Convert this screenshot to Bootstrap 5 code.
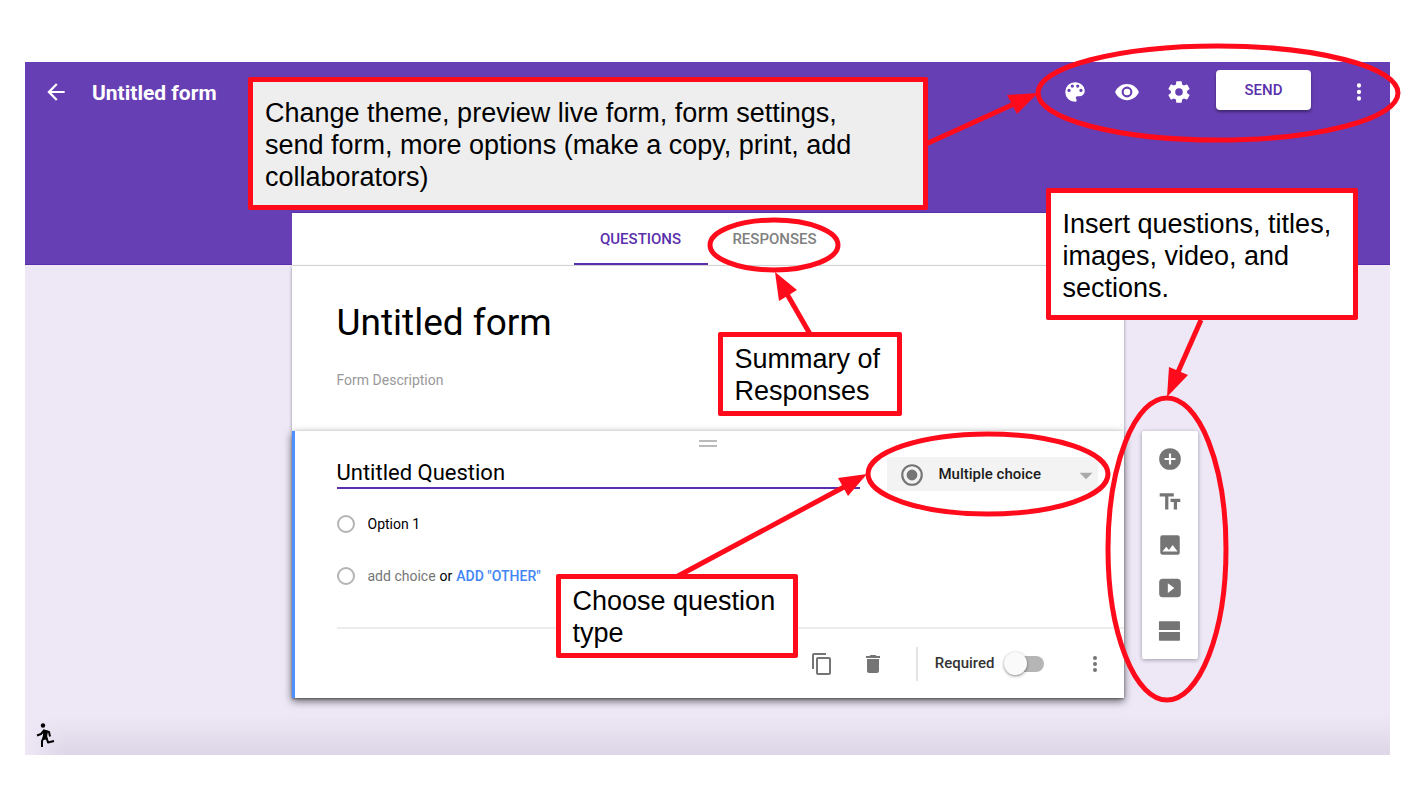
<!DOCTYPE html>
<html lang="en">
<head>
<meta charset="utf-8">
<meta name="viewport" content="width=device-width, initial-scale=1">
<title>Untitled form</title>
<link href="https://cdn.jsdelivr.net/npm/bootstrap@5.3.0/dist/css/bootstrap.min.css" rel="stylesheet">
<style>
  :root { --purple: #673fb4; --purple-dark: #5a2fac; --note: #ff0b1b; --icon: #757575; }
  body { font-family: Roboto, sans-serif; font-size: 14px; color: #000; background: #fff; overflow-x: hidden; }
  .stage {
    margin: 62px 20px 33px 25px;
    background:
      linear-gradient(90deg, #ede7f6 0, #ede7f600 40px) bottom left / 60px 40px no-repeat,
      linear-gradient(#ddd6e600, #ddd6e6) bottom / 100% 40px no-repeat,
      linear-gradient(var(--purple) 0 202px, var(--purple-dark) 202px 203px, #ede7f6 203px);
  }
  .icon { width: 26px; height: 26px; fill: currentColor; display: block; flex: none; }
  .icon-btn { border: 0; background: none; padding: 0; color: inherit; display: flex; align-items: center; justify-content: center; }

  .topbar { height: 60px; padding: 0 17px; color: #fff; }
  .topbar h1 { font-size: 21px; font-weight: 700; line-height: 24px; margin: 2px 0 0 22px; }
  .topbar .icon-btn { width: 28px; }
  .send { width: 95px; height: 40px; margin: 0 34px 4px 23px; background: #fff; color: var(--purple-dark); border: 0; border-radius: 4px; font-size: 15px; font-weight: 500; box-shadow: 0 2px 3px #0006; }

  .board { display: grid; grid-template-columns: 1fr minmax(0, 832px) 1fr; padding-top: 91px; align-items: start; }
  .form-col { grid-column: 2; }
  .tabs { height: 53px; background: #fff; border-bottom: 1px solid #e0e0e0; box-shadow: 0 -1px 0 var(--purple-dark); }
  .tabs a { width: 134px; height: 52px; line-height: 53px; text-align: center; color: #808080; font-size: 15px; font-weight: 500; text-decoration: none; }
  .tabs a.active { color: var(--purple-dark); border-bottom: 2px solid var(--purple-dark); }
  .sheet-head { height: 165px; background: #fff; padding: 34px 45px 0; box-shadow: 0 1px 3px #0006; }
  .plain { border: 0; border-radius: 0; background: none; padding: 0; outline: 0; display: block; width: 100%; color: #000; }
  .form-title { font-size: 37px; height: 46px; }
  .form-desc { height: 24px; margin-top: 22px; }
  .form-desc::placeholder { color: #999; opacity: 1; }

  .question { position: relative; background: #fff; border-left: 3px solid #4d90fe; box-shadow: 0 3px 8px #0009, 0 1px 2px #0005; padding: 9px 0 0 42px; }
  .grip { width: 18px; height: 7px; border: solid #bbb; border-width: 2px 0; }
  .grip-row { margin: 0 0 10px -45px; }
  .q-row { gap: 27px; padding-right: 26px; margin-bottom: 7px; }
  .q-title { height: 32px; font-size: 22px; border-bottom: 2px solid var(--purple-dark); }
  .type-box { width: 211px; flex: none; position: relative; }
  .type-box select { height: 34px; padding: 0 30px 0 52px; border: 0; border-radius: 2px; background: #f3f3f3; color: #1c1c1c; font-size: 15px; font-weight: 500; }
  .type-box svg { position: absolute; top: 5px; pointer-events: none; }
  .type-box .mark-radio { left: 12px; color: var(--icon); }
  .type-box .mark-caret { right: -1px; color: #aaa; }
  .choice { height: 52px; gap: 13px; }
  .choice input[type=radio] { appearance: none; width: 18px; height: 18px; margin: 0; border: 2px solid #b4b4b4; border-radius: 50%; background: #fff; }
  .choice .plain { width: 68px; }
  .choice .plain::placeholder { color: #757575; opacity: 1; }
  .choice a { color: #4285f4; font-weight: 500; text-decoration: none; margin-left: 4px; }
  .q-foot { margin-top: 25px; border-top: 2px solid #ececec; height: 71px; color: var(--icon); padding-right: 15px; }
  .q-foot .icon { width: 24px; height: 24px; }
  .q-foot .icon-btn { width: 27px; }
  .q-foot .bar-line { width: 2px; height: 34px; background: #e4e4e4; margin: 0 17px 0 29px; }
  .q-foot label { color: #333; font-size: 15px; font-weight: 500; }
  .toggle { appearance: none; position: relative; width: 38px; height: 16px; border-radius: 8px; background: #b5b5b5; margin: 0 38px 0 11px; }
  .toggle::before { content: ""; position: absolute; left: -2px; top: -4px; width: 23px; height: 23px; border-radius: 50%; background: #fafafa; box-shadow: 0 1px 3px #0007; }

  .tools { grid-column: 3; justify-self: start; width: 56px; margin: 218px 0 0 18px; padding: 6px 0 7px; background: #fff; border-radius: 2px; color: var(--icon); box-shadow: 0 1px 4px #0005; }
  .tools .icon-btn { height: 43px; width: 100%; }
  .stage footer { padding: 24px 0 7px 7px; }

  /* Callouts and markers laid over the form */
  .markers { position: absolute; z-index: 5; pointer-events: none; overflow: visible; fill: none; stroke: var(--note); stroke-width: 5; }
  .markers polygon { fill: var(--note); stroke: none; }
  .note { position: absolute; z-index: 6; margin: 0; border: 5px solid var(--note); border-radius: 2px; background: #fff; padding: 6px 11px 4px 12px; font: 27px/32px "Liberation Sans", Arial, sans-serif; }
  .note.tall { padding-top: 15px; }
  .note-top { top: 15px; right: 462px; width: 680px; height: 133px; padding-right: 48px; background: #eee; }
  .note-insert { left: 754px; top: -25px; width: 312px; height: 132px; }
  .note-summary { left: 426px; top: 119px; width: 184px; }
  .note-type { left: 264px; top: 361px; width: 242px; }
  .markers-top { top: -22px; right: -20px; }
  .markers-form { top: 0; left: 0; }
</style>
</head>
<body>
<div class="stage position-relative">
  <header class="topbar d-flex align-items-center">
    <button class="icon-btn" aria-label="Back"><svg class="icon" viewBox="0 0 24 24"><path d="M20 11H7.830l5.590-5.590L12 4l-8 8 8 8 1.410-1.410L7.830 13H20z"/></svg></button>
    <h1>Untitled form</h1>
    <div class="d-flex align-items-center gap-4 ms-auto">
      <button class="icon-btn" aria-label="Theme"><svg class="icon" viewBox="0 0 24 24"><path d="M12 3a9 9 0 0 0 0 18c.83 0 1.500-.67 1.500-1.500 0-.39-.15-.74-.39-1.010-.23-.26-.38-.61-.38-.99 0-.83.67-1.500 1.500-1.500H16a5 5 0 0 0 5-5c0-4.420-4.030-8-9-8zm-5.500 9a1.500 1.500 0 1 1 0-3 1.500 1.500 0 0 1 0 3zm3-4a1.500 1.500 0 1 1 0-3 1.500 1.500 0 0 1 0 3zm5 0a1.500 1.500 0 1 1 0-3 1.500 1.500 0 0 1 0 3zm3 4a1.500 1.500 0 1 1 0-3 1.500 1.500 0 0 1 0 3z"/></svg></button>
      <button class="icon-btn" aria-label="Preview"><svg class="icon" viewBox="0 0 24 24"><path d="M12 4.500C7 4.500 2.730 7.610 1 12c1.730 4.390 6 7.500 11 7.500s9.270-3.110 11-7.500c-1.730-4.390-6-7.500-11-7.500zM12 17a5 5 0 1 1 0-10 5 5 0 0 1 0 10zm0-8a3 3 0 1 0 0 6 3 3 0 0 0 0-6z"/></svg></button>
      <button class="icon-btn" aria-label="Settings"><svg class="icon" viewBox="0 0 24 24"><path d="M19.430 12.980c.04-.32.07-.64.07-.98s-.03-.66-.07-.98l2.110-1.650c.19-.15.24-.42.12-.64l-2-3.460c-.12-.22-.39-.3-.61-.22l-2.490 1c-.52-.4-1.080-.73-1.690-.98l-.38-2.650A.49.49 0 0 0 14 2h-4c-.25 0-.46.18-.49.42l-.38 2.650c-.61.25-1.170.59-1.690.98l-2.490-1c-.23-.09-.49 0-.61.22l-2 3.460c-.13.22-.07.49.12.64l2.110 1.650c-.04.32-.07.65-.07.98s.03.66.07.98l-2.110 1.650c-.19.15-.24.42-.12.64l2 3.460c.12.22.39.3.61.22l2.490-1c.52.4 1.080.73 1.690.98l.38 2.650c.03.24.24.42.49.42h4c.25 0 .46-.18.49-.42l.38-2.650c.61-.25 1.170-.59 1.690-.98l2.490 1c.23.09.49 0 .61-.22l2-3.460c.12-.22.07-.49-.12-.64zM12 15.500a3.500 3.500 0 1 1 0-7 3.500 3.500 0 0 1 0 7z"/></svg></button>
    </div>
    <button class="send">SEND</button>
    <button class="icon-btn" aria-label="More options"><svg class="icon" viewBox="0 0 24 24"><path d="M12 8a2 2 0 1 0 0-4 2 2 0 0 0 0 4zm0 2a2 2 0 1 0 0 4 2 2 0 0 0 0-4zm0 6a2 2 0 1 0 0 4 2 2 0 0 0 0-4z"/></svg></button>
  </header>

  <main class="board">
    <div class="form-col position-relative">
      <nav class="tabs d-flex justify-content-center" aria-label="Form views">
        <a href="#questions" class="active">QUESTIONS</a>
        <a href="#responses">RESPONSES</a>
      </nav>
      <section class="sheet-head">
        <input class="plain form-title" aria-label="Form title" value="Untitled form">
        <input class="plain form-desc" aria-label="Form description" placeholder="Form Description">
      </section>

      <section class="question" id="questions">
        <div class="grip-row d-flex justify-content-center"><span class="grip"></span></div>
        <div class="q-row d-flex align-items-start">
          <input class="plain q-title flex-fill" aria-label="Question" value="Untitled Question">
          <div class="type-box">
            <select class="form-select" aria-label="Question type"><option>Multiple choice</option></select>
            <svg class="icon mark-radio" viewBox="0 0 24 24"><path d="M12 7a5 5 0 1 0 0 10 5 5 0 0 0 0-10zm0-5a10 10 0 1 0 0 20 10 10 0 0 0 0-20zm0 18a8 8 0 1 1 0-16 8 8 0 0 1 0 16z"/></svg>
            <svg class="icon mark-caret" viewBox="0 0 24 24"><path d="M6 10l6 6 6-6z"/></svg>
          </div>
        </div>
        <div class="choice d-flex align-items-center">
          <input type="radio" name="choice" aria-label="Option 1">
          <input class="plain" aria-label="Option text" value="Option 1">
        </div>
        <div class="choice d-flex align-items-center">
          <input type="radio" name="choice" aria-label="New option">
          <div class="d-flex align-items-center">
            <input class="plain me-1" aria-label="Add choice" placeholder="add choice">
            <span>or</span>
            <a href="#other">ADD "OTHER"</a>
          </div>
        </div>
        <div class="q-foot d-flex align-items-center justify-content-end">
          <button class="icon-btn" aria-label="Duplicate"><svg class="icon" viewBox="0 0 24 24"><path d="M16 1H4a2 2 0 0 0-2 2v14h2V3h12zm3 4H8a2 2 0 0 0-2 2v14c0 1.100.9 2 2 2h11a2 2 0 0 0 2-2V7a2 2 0 0 0-2-2zm0 16H8V7h11z"/></svg></button>
          <button class="icon-btn ms-4" aria-label="Delete"><svg class="icon" viewBox="0 0 24 24"><path d="M6 19c0 1.100.9 2 2 2h8a2 2 0 0 0 2-2V7H6zM19 4h-3.500l-1-1h-5l-1 1H5v2h14z"/></svg></button>
          <span class="bar-line"></span>
          <label for="required">Required</label>
          <input class="toggle" type="checkbox" role="switch" id="required">
          <button class="icon-btn" aria-label="Question options"><svg class="icon" viewBox="0 0 24 24"><path d="M12 8a2 2 0 1 0 0-4 2 2 0 0 0 0 4zm0 2a2 2 0 1 0 0 4 2 2 0 0 0 0-4zm0 6a2 2 0 1 0 0 4 2 2 0 0 0 0-4z"/></svg></button>
        </div>
      </section>

      <svg class="markers markers-form" width="950" height="500" viewBox="292 213 950 500" aria-hidden="true">
        <ellipse cx="774" cy="245" rx="64" ry="25"/>
        <path d="M810 334L787 294"/><polygon points="775,272 797,290 779,301"/>
        <ellipse cx="988" cy="474" rx="120" ry="40"/>
        <path d="M678 576L844 487"/><polygon points="867,474 838,478 848,496"/>
        <ellipse cx="1167" cy="549" rx="59" ry="151"/>
        <path d="M1201 320L1178 372"/><polygon points="1167,397 1169,367 1188,375"/>
      </svg>
      <p class="note note-summary">Summary of Responses</p>
      <p class="note note-type">Choose question type</p>
      <p class="note note-insert tall">Insert questions, titles, images, video, and sections.</p>
    </div>

    <div class="tools" role="toolbar" aria-label="Insert">
      <button class="icon-btn" aria-label="Add question"><svg class="icon" viewBox="0 0 24 24"><path d="M12 2a10 10 0 1 0 0 20 10 10 0 0 0 0-20zm5 11h-4v4h-2v-4H7v-2h4V7h2v4h4z"/></svg></button>
      <button class="icon-btn" aria-label="Add title"><svg class="icon" viewBox="0 0 24 24"><path d="M2.500 4v3h5v12h3V7h5V4zm19 5h-9v3h3v7h3v-7h3z"/></svg></button>
      <button class="icon-btn" aria-label="Add image"><svg class="icon" viewBox="0 0 24 24"><path d="M21 19V5a2 2 0 0 0-2-2H5a2 2 0 0 0-2 2v14c0 1.100.9 2 2 2h14a2 2 0 0 0 2-2zM5 18l3.500-4.500 2.500 3 3.500-4.500 4.500 6z"/></svg></button>
      <button class="icon-btn" aria-label="Add video"><svg class="icon" viewBox="0 0 24 24"><path d="M6 3.500h12c3 0 4 1 4 4v9c0 3-1 4-4 4H6c-3 0-4-1-4-4v-9c0-3 1-4 4-4zm4 4v9l6-4.500z"/></svg></button>
      <button class="icon-btn" aria-label="Add section"><svg class="icon" viewBox="0 0 24 24"><path d="M2.500 3h18a.7.7 0 0 1 .7.700v7.300h-19.400V3.700a.7.7 0 0 1 .7-.7zM1.800 13h19.400v7.300a.7.7 0 0 1-.7.700h-18a.7.7 0 0 1-.7-.7z"/></svg></button>
    </div>
  </main>

  <footer>
    <svg class="icon" viewBox="0 0 26 26" aria-hidden="true"><circle cx="11" cy="3.500" r="2.200"/><g fill="none" stroke="#000" stroke-width="2" stroke-linejoin="round"><path d="M5 13.500l4-1.500 3-3.500 5 1.500 1 4.500"/><path d="M11.500 16l-1.500 3v6M14 14l2 6.500 6-1.500"/></g><path d="M11 7.500l5 1.500-1 6 .5 2.500-5.500.500 1-5z"/></svg>
  </footer>

  <svg class="markers markers-top" width="490" height="110" viewBox="920 40 490 110" aria-hidden="true">
    <ellipse cx="1218" cy="93" rx="180" ry="47"/>
    <path d="M926 144L1014 104"/><polygon points="1038,93 1007,95 1017,114"/>
  </svg>
  <p class="note note-top tall">Change theme, preview live form, form settings, send form, more options (make a copy, print, add collaborators)</p>
</div>
<script src="https://cdn.jsdelivr.net/npm/bootstrap@5.3.0/dist/js/bootstrap.bundle.min.js"></script>
</body>
</html>
